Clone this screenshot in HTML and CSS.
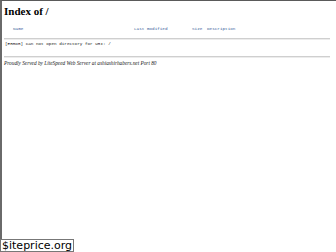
FILE: index.html
```html
<!DOCTYPE html>
<html lang="en">
<head>
    <meta charset="UTF-8">
    <title>Index of /</title>
    <link rel="stylesheet" href="styles.css">
</head>
<body>
    <div class="frame">
        <h1 class="title">Index of /</h1>
        <div class="listing-head">
            <a href="#" class="col-link">Name</a>
            <a href="#" class="col-link">Last modified</a>
            <a href="#" class="col-link">Size</a>
            <a href="#" class="col-link">Description</a>
        </div>
        <hr class="rule rule-top">
        <pre class="error">[ERROR] Can not open directory for URI: /</pre>
        <hr class="rule rule-bottom">
        <address class="server">Proudly Served by LiteSpeed Web Server at ashiashirhabers.net Port 80</address>
    </div>
    <div class="watermark">$iteprice.org</div>
</body>
</html>
```

FILE: styles.css
```css
html, body {
    margin: 0;
    padding: 0;
    height: 100%;
    background-color: #ffffff;
}
.frame {
    box-sizing: border-box;
    height: 100%;
    border-top: 1px solid #5a5a5a;
    border-left: 2px solid #6a6a6a;
    padding: 0 6px 0 2px;
    font-family: "Liberation Serif", serif;
    color: #000;
}
.title {
    font-size: 11px;
    line-height: 13px;
    font-weight: bold;
    margin: 4px 0 0;
}
.listing-head {
    display: grid;
    grid-template-columns: 121px 58px 15px auto;
    padding-left: 9px;
    margin-top: 8px;
    font-family: "Liberation Mono", monospace;
    font-size: 4.3px;
    line-height: 6px;
}
.col-link {
    color: #3d5f9c;
    text-decoration: none;
}
.rule {
    border: 0;
    border-top: 1px solid #cfcfcf;
    box-shadow: 0 1px 0 #ececec;
    margin: 0;
}
.rule-top {
    margin-top: 6px;
}
.error {
    font-family: "Liberation Mono", monospace;
    font-size: 4.3px;
    line-height: 6px;
    margin: 2px 0 0 1px;
    color: #222;
}
.rule-bottom {
    margin-top: 9px;
}
.server {
    font-size: 5.3px;
    line-height: 7px;
    margin-top: 3px;
    font-style: italic;
    color: #222;
}
.watermark {
    position: absolute;
    left: 0;
    bottom: 0;
    background: #fff;
    border: 1px solid #777;
    font-family: "DejaVu Sans", sans-serif;
    font-size: 11px;
    line-height: 11px;
    padding: 0 1px;
    color: #000;
}
```
